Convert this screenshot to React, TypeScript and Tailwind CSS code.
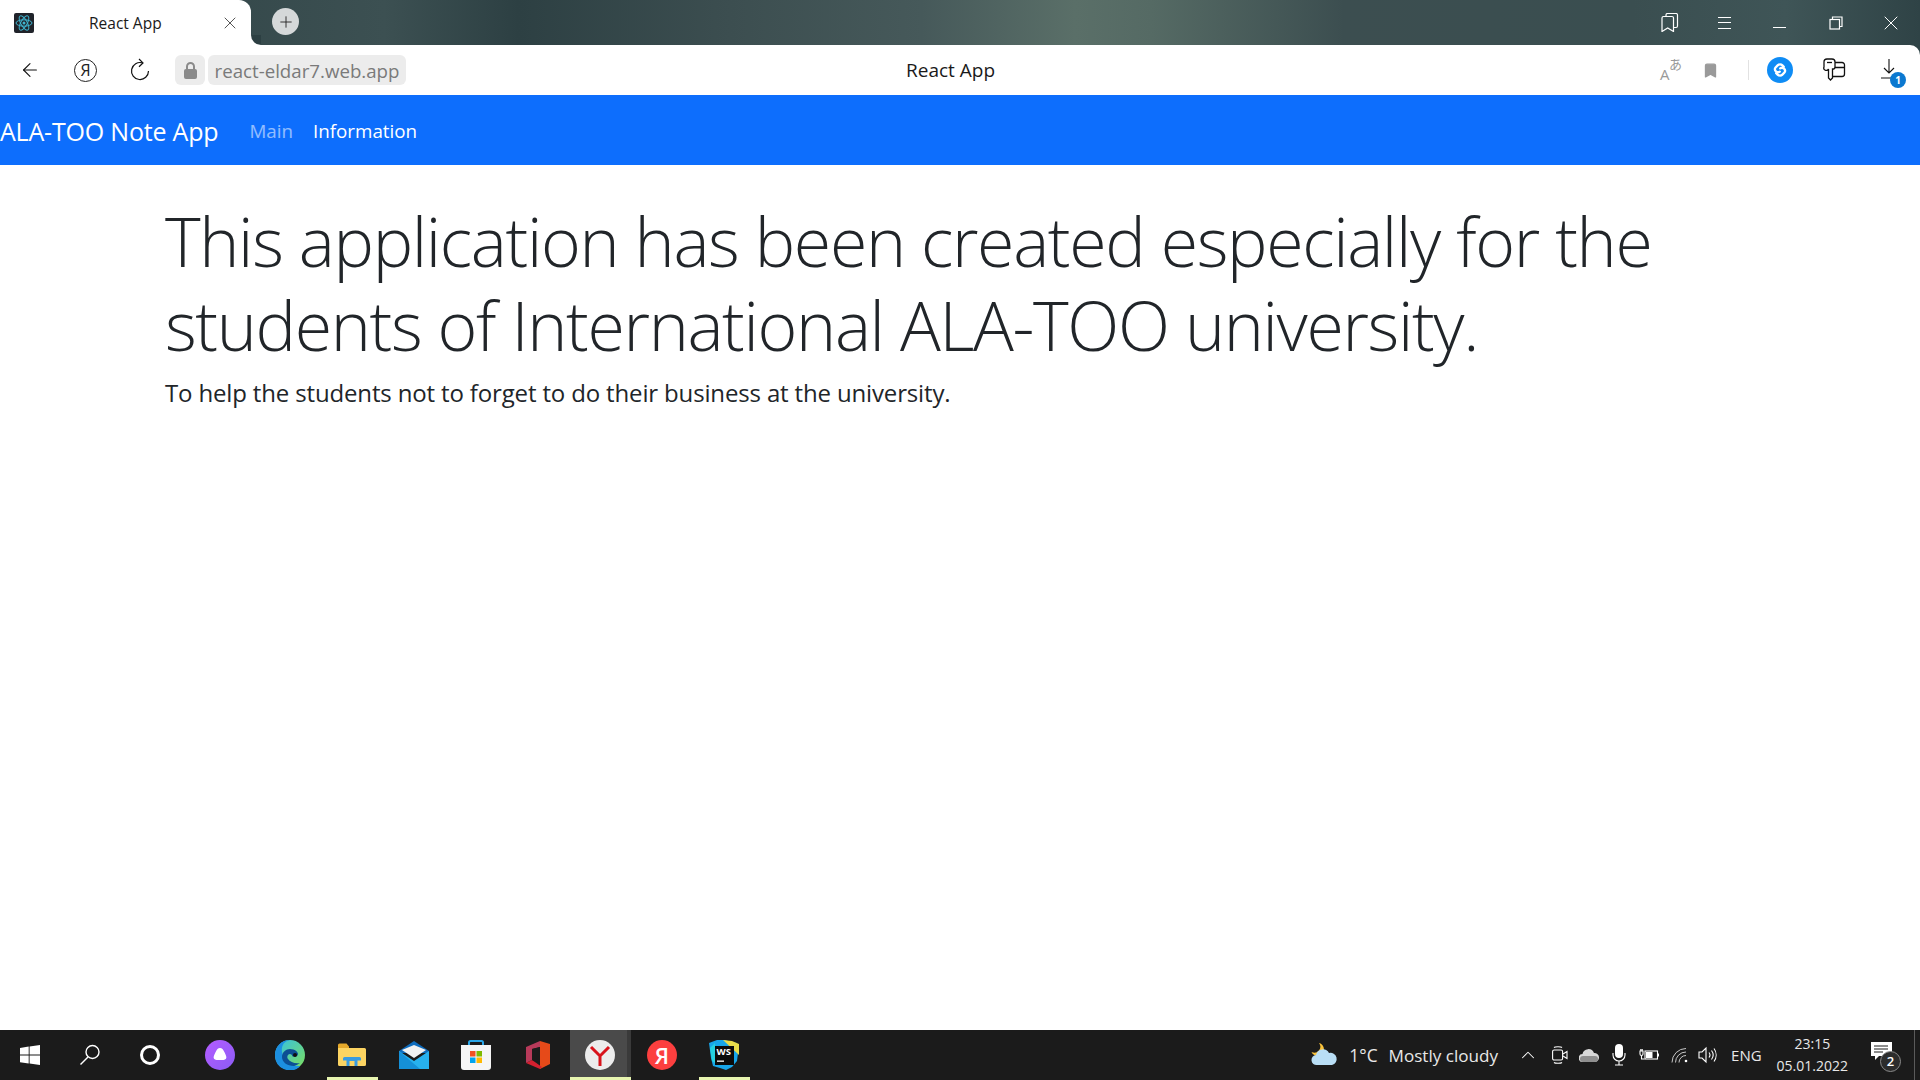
import React from 'react';
import { ArrowLeft, X, Plus, Bookmark, ChevronUp } from 'lucide-react';

const sans = "font-['Open_Sans','Noto_Sans',sans-serif]";

const WindowsLogo = () => (
  <svg width="20" height="20" viewBox="0 0 20 20" fill="#fff">
    <path d="M0 2.900 8.700 1.600v8H0zM9.600 1.500 20 0v9.600H9.600zM0 10.500h8.700v8L0 17.200zM9.600 10.500H20V20L9.600 18.600z" />
  </svg>
);

const SearchIcon = () => (
  <svg width="22" height="22" viewBox="0 0 22 22" fill="none" stroke="#fff" strokeWidth="1.400">
    <circle cx="13.500" cy="8" r="6.500" />
    <path d="M9 13 1.500 20.500" />
  </svg>
);

const AliceIcon = () => (
  <svg width="30" height="30" viewBox="0 0 30 30">
    <defs>
      <linearGradient id="alice" x1="0" y1="0" x2="1" y2="1">
        <stop offset="0" stopColor="#b45cff" />
        <stop offset="1" stopColor="#8b5cf6" />
      </linearGradient>
    </defs>
    <circle cx="15" cy="15" r="15" fill="url(#alice)" />
    <path d="M15 8c2 0 3.200 1.600 4.500 4.200 1.300 2.600 2.500 5 1.500 6.500-1 1.300-3.500 1.300-6 1.300s-5 0-6-1.300c-1-1.500.2-3.900 1.500-6.500C11.800 9.600 13 8 15 8z" fill="#fff" />
  </svg>
);

const EdgeIcon = () => (
  <svg width="30" height="30" viewBox="0 0 30 30">
    <defs>
      <linearGradient id="edgeB" x1="0" y1="0" x2="1" y2="1">
        <stop offset="0" stopColor="#33bfe8" />
        <stop offset="1" stopColor="#7ee05a" />
      </linearGradient>
    </defs>
    <circle cx="15" cy="15" r="15" fill="url(#edgeB)" />
    <path d="M0 15C0 6 7 0 15 0c-6 1-9 6-8 12 1 8 9 14 17 14l1 .5A15 15 0 0 1 0 15z" fill="#1c8fe0" />
    <path d="M7 17c0-5 4-8 8-8 5 0 8 3 8 5 0 2-2 2.500-4 2.500-1.500 0-2-.5-2-1.500-3-3-6 1-4 4 2 3 7 5 12 4a15 15 0 0 1-6 3C12 26 7 22 7 17z" fill="#0c4f94" />
    <circle cx="20" cy="15" r="2" fill="#111" />
  </svg>
);

const FolderIcon = () => (
  <svg width="28" height="24" viewBox="0 0 28 24">
    <path d="M0 2a1.500 1.500 0 0 1 1.500-1.500h7L11 3.500v3H0z" fill="#e6a92b" />
    <path d="M0 5h26.500A1.500 1.500 0 0 1 28 6.500v15a1.500 1.500 0 0 1-1.500 1.500h-25A1.500 1.500 0 0 1 0 21.500z" fill="#fcd462" />
    <path d="M5 15.500A1.500 1.500 0 0 1 6.500 14h15a1.500 1.500 0 0 1 1.500 1.500v2h-3.500V23h-11v-5.500H5z" fill="#3a9be0" />
    <path d="M11.500 18h5v5h-5z" fill="#fcd462" />
  </svg>
);

const MailIcon = () => (
  <svg width="30" height="28" viewBox="0 0 30 28">
    <path d="M0 10 15 0l15 10v2H0z" fill="#0f6cbd" />
    <path d="M3 9 15 4l12 5-12 8z" fill="#f2f2f2" />
    <path d="M0 10l15 10 15-10v18H0z" fill="#27b1ee" />
    <path d="M0 10l21 18H0z" fill="#1590d8" />
  </svg>
);

const StoreIcon = () => (
  <svg width="30" height="30" viewBox="0 0 30 30">
    <path d="M8 6V2.500A1.500 1.500 0 0 1 9.500 1h11A1.500 1.500 0 0 1 22 2.500V6" fill="none" stroke="#2aa6e8" strokeWidth="2" />
    <path d="M0 5h30v22a3 3 0 0 1-3 3H3a3 3 0 0 1-3-3z" fill="#f5f5f5" />
    <rect x="9" y="11" width="5.500" height="5.500" fill="#f25022" />
    <rect x="15.500" y="11" width="5.500" height="5.500" fill="#7fba00" />
    <rect x="9" y="17.500" width="5.500" height="5.500" fill="#00a4ef" />
    <rect x="15.500" y="17.500" width="5.500" height="5.500" fill="#ffb900" />
  </svg>
);

const OfficeIcon = () => (
  <svg width="24" height="28" viewBox="0 0 24 28">
    <path d="M14 0l10 3v20l-10 5z" fill="#e64a19" />
    <path d="M14 0 0 6v16l6-3V8l8-2z" fill="#b83a5a" />
    <path d="M0 22l14 6 2-2-10-7z" fill="#d4202f" />
    <path d="M6 8l8-2v16l-8-3z" fill="#1b1b1b" />
  </svg>
);

const YandexBrowserIcon = () => (
  <svg width="30" height="30" viewBox="0 0 30 30">
    <circle cx="15" cy="15" r="15" fill="#ececec" />
    <path d="M6 7l9 9 9-9M15 16v10" fill="none" stroke="#d8131b" strokeWidth="3" />
  </svg>
);

const WebStormIcon = () => (
  <svg width="30" height="30" viewBox="0 0 30 30">
    <path d="M0 3 8 0h8l6 2 6 1 1 10-1 8-5 6-6 3-6-2-7-2-2-8z" fill="#17a6ea" />
    <path d="M14 0l9 1 7 3v11z" fill="#e8dc4a" />
    <path d="M1 8 6 3v20l-3-2z" fill="#24d0e0" />
    <path d="M6 6h19v19H6z" fill="#0b0b0b" />
    <text x="7.500" y="15" fontSize="9.500" fontWeight="700" fill="#fff" fontFamily="'Open Sans',sans-serif">WS</text>
    <rect x="8" y="20.500" width="7" height="1.300" fill="#fff" />
  </svg>
);

const ReactFavicon = () => (
  <svg width="20" height="20" viewBox="0 0 20 20">
    <rect width="20" height="20" rx="2" fill="#20232a" />
    <g fill="none" stroke="#3fb4cf" strokeWidth="1">
      <ellipse cx="10" cy="10" rx="8" ry="3.200" />
      <ellipse cx="10" cy="10" rx="8" ry="3.200" transform="rotate(60 10 10)" />
      <ellipse cx="10" cy="10" rx="8" ry="3.200" transform="rotate(120 10 10)" />
    </g>
    <circle cx="10" cy="10" r="1.500" fill="#3fb4cf" />
  </svg>
);

const ReloadIcon = () => (
  <svg width="24" height="24" viewBox="0 0 24 24" fill="none" stroke="#111" strokeWidth="1.200">
    <path d="M14.500 4.900A8.500 8.500 0 1 0 20.500 13" />
    <path d="M11 1l4 3.900L11 8.800" />
  </svg>
);

const LockIcon = () => (
  <svg width="13" height="17" viewBox="0 0 13 17">
    <path d="M3 8V4.500a3.500 3.500 0 0 1 7 0V8" fill="none" stroke="#8a8a8a" strokeWidth="2" />
    <rect x="0" y="7" width="13" height="10" rx="2" fill="#8a8a8a" />
  </svg>
);

const ShazamIcon = () => (
  <svg width="26" height="26" viewBox="0 0 26 26">
    <circle cx="13" cy="13" r="13" fill="#0f8cf5" />
    <path d="M16.800 9.800 15.400 8.400a3.400 3.400 0 0 0-4.800 0L8.600 10.400a3 3 0 0 0 4.200 4.200M9.200 16.200 10.600 17.600a3.400 3.400 0 0 0 4.800 0L17.400 15.600a3 3 0 0 0-4.200-4.200" fill="none" stroke="#fff" strokeWidth="2.300" strokeLinecap="round" />
  </svg>
);

const KeyFolderIcon = () => (
  <svg width="24" height="24" viewBox="0 0 24 24" fill="none" stroke="#111" strokeWidth="1.300">
    <path d="M1 4a3 3 0 0 1 3-3h5a3 3 0 0 1 3 3v5a2 2 0 0 1-2.500 2v9l-2 2-2-2v-9A2 2 0 0 1 1 9z" />
    <path d="M4 4.500h5" />
    <path d="M12 4.500h7a2.500 2.500 0 0 1 2.500 2.500v9a2.500 2.500 0 0 1-2.500 2.500H10M12 9.500h9.500" />
  </svg>
);

const TranslateIcon = () => (
  <div className={`relative w-[22px] h-[22px] text-[#999] ${sans}`}>
    <span className="absolute left-0 bottom-[-1px] text-[15px] leading-none">A</span>
    <span className="absolute right-0 top-[-2px] text-[13px] leading-none font-['Noto_Sans_CJK_JP',sans-serif]">あ</span>
  </div>
);

const BookmarksIcon = () => (
  <svg width="18" height="19" viewBox="0 0 18 19" fill="none" stroke="#fff" strokeWidth="1.200">
    <path d="M5 3V2a1.500 1.500 0 0 1 1.500-1.500H15A1.500 1.500 0 0 1 16.500 2v11a1.500 1.500 0 0 1-1.500 1.500h-2" />
    <path d="M1 5a1.500 1.500 0 0 1 1.500-1.500h8.500A1.500 1.500 0 0 1 12.500 5v13.500L6.700 15 1 18.500z" />
  </svg>
);

const RestoreIcon = () => (
  <svg width="14" height="14" viewBox="0 0 14 14" fill="none" stroke="#fff" strokeWidth="1.200">
    <path d="M3.500 3V1h9.500v9.500h-2.500" />
    <rect x="1" y="3.500" width="9.500" height="9.500" />
  </svg>
);

const DownloadIcon = () => (
  <div className="relative w-[24px] h-[24px]">
    <svg width="16" height="22" viewBox="0 0 16 22" fill="none" stroke="#111" strokeWidth="1.100">
      <path d="M8 1v14M3 10l5 5 5-5M0 20h12" />
    </svg>
    <span className={`absolute left-[9px] top-[14px] w-[16px] h-[16px] rounded-full bg-[#0b78d0] text-white text-[10px] font-bold leading-[16px] text-center ${sans}`}>1</span>
  </div>
);

const WeatherIcon = () => (
  <svg width="28" height="24" viewBox="0 0 28 24">
    <path d="M9 0a6.500 6.500 0 1 1-7.500 9A6 6 0 0 0 9 0z" fill="#f9c23c" />
    <path d="M7 22a5 5 0 0 1-1-10 7 7 0 0 1 13-2 6 6 0 0 1 3 12z" fill="#b9def5" />
  </svg>
);

const MeetIcon = () => (
  <svg width="16" height="20" viewBox="0 0 16 20" fill="none" stroke="#fff" strokeWidth="1.100">
    <path d="M2 2.500c1-1 7-1 8 0M2 17.500c1 1 7 1 8 0" />
    <rect x="0.600" y="5" width="10" height="10" rx="1.500" />
    <path d="M11 9l4-2.500v7L11 11" />
  </svg>
);

const CloudIcon = () => (
  <svg width="20" height="14" viewBox="0 0 20 14">
    <path d="M4 14a4 4 0 0 1-.5-8A6 6 0 0 1 15 5a4.500 4.500 0 0 1 1 9z" fill="#d8d8d8" />
    <path d="M4 14a3 3 0 0 1 0-6h12a3 3 0 0 1 0 6z" fill="#8f8f8f" />
  </svg>
);

const MicIcon = () => (
  <svg width="14" height="22" viewBox="0 0 14 22" fill="none">
    <rect x="3" y="0" width="8" height="14" rx="4" fill="#fff" />
    <path d="M1 9v2a6 6 0 0 0 12 0V9M7 17v4M3 21h8" stroke="#fff" strokeWidth="1.100" />
  </svg>
);

const BatteryIcon = () => (
  <svg width="20" height="14" viewBox="0 0 20 14" fill="none" stroke="#fff" strokeWidth="1.100">
    <rect x="6" y="3" width="12.500" height="8" />
    <rect x="7" y="4" width="6.500" height="6" fill="#fff" stroke="none" />
    <path d="M19.500 5.500v3" />
    <path d="M1 3v3a1.500 1.500 0 0 0 3 0V3zM1.800 1v2M3.200 1v2M2.500 7.500V11h3" />
  </svg>
);

const WifiIcon = () => (
  <svg width="18" height="16" viewBox="0 0 18 16" fill="none" stroke="#c8c8c8" strokeWidth="1">
    <path d="M1 15.500A14 14 0 0 1 15 1.500M4.500 15.500A10.500 10.500 0 0 1 15 5M8 15.500A7 7 0 0 1 15 8.500" />
    <circle cx="15" cy="14" r="1.300" fill="#fff" stroke="none" />
  </svg>
);

const SpeakerIcon = () => (
  <svg width="20" height="18" viewBox="0 0 20 18" fill="none" stroke="#fff" strokeWidth="1.100">
    <path d="M1 6h3l4-4v14l-4-4H1z" />
    <path d="M11 6.500a4 4 0 0 1 0 5M13.500 4.500a7.500 7.500 0 0 1 0 9M16 2.500a11 11 0 0 1 0 13" />
  </svg>
);

const ActionCenterIcon = () => (
  <div className="relative w-[32px] h-[32px]">
    <svg width="21" height="19" viewBox="0 0 21 19" className="absolute left-0 top-[3px]">
      <path d="M0 0h21v14H8l-4 4v-4H0z" fill="#fff" />
      <path d="M3 4h14M3 7h14M3 10h9" stroke="#1a1a1a" strokeWidth="1" />
    </svg>
    <span className={`absolute left-[9px] top-[12px] w-[21px] h-[21px] rounded-full border border-[#8a8a8a] bg-[#2c2c2c] text-white text-[13px] font-semibold leading-[19px] text-center ${sans}`}>2</span>
  </div>
);

const App = () => {
  return (
    <div className={`h-screen flex flex-col overflow-hidden bg-white ${sans}`}>
      {/* browser tab strip */}
      <div className="h-[45px] flex items-stretch shrink-0 bg-[linear-gradient(90deg,#2c3f42_0%,#3c5052_20%,#2d4043_27%,#3c4e50_38%,#46595a_48%,#5a6f68_56%,#556a64_60%,#3c4e50_70%,#3a4e50_85%,#3f5557_93%,#2f4346_100%)]">
        <div className="relative w-[251px] bg-white rounded-tr-xl flex items-center pl-[14px] pr-[11px]">
          <ReactFavicon />
          <span className="ml-[55px] mt-[2px] text-[15.500px] text-[#1a1a1a] leading-none">React App</span>
          <X className="ml-auto text-[#333]" size={20} strokeWidth={1} />
          <div className="absolute left-full bottom-0 w-[10px] h-[10px] bg-white">
            <div className="w-full h-full bg-[#2c3f42] rounded-bl-[10px]" />
          </div>
        </div>
        <div className="ml-[21px] mt-[8px] w-[27px] h-[27px] rounded-full bg-[#d5d8d9] flex items-center justify-center">
          <Plus size={18} strokeWidth={1.2} className="text-[#222]" />
        </div>
        <div className="ml-auto flex items-center pr-[17px]">
          <BookmarksIcon />
          <div className="ml-[39px] flex flex-col gap-[4.500px] w-[13px]">
            <div className="h-px bg-white" />
            <div className="h-px bg-white" />
            <div className="h-px bg-white" />
          </div>
          <div className="ml-[42px] mt-[10px] w-[13px] h-px bg-white" />
          <div className="ml-[43px]"><RestoreIcon /></div>
          <X className="ml-[36px] text-white" size={24} strokeWidth={1} />
        </div>
      </div>

      {/* browser toolbar */}
      <div className="relative h-[50px] shrink-0 bg-[#2f4346]">
        <div className="h-full bg-white rounded-tr-[10px] flex items-center pl-[19px] pr-[15px]">
          <ArrowLeft size={22} strokeWidth={1.2} className="text-[#111]" />
          <div className="ml-[33px] w-[23px] h-[23px] rounded-full border-[1.500px] border-[#222] text-[#222] text-[16px] leading-[20px] text-center">Я</div>
          <div className="ml-[31px]"><ReloadIcon /></div>
          <div className="ml-[23px] w-[30px] h-[30px] rounded-md bg-[#ececec] flex items-center justify-center">
            <LockIcon />
          </div>
          <div className="ml-[3px] w-[198px] h-[30px] rounded-md bg-[#ececec] text-[#7a7a7a] text-[18.700px] leading-[31px] text-center whitespace-nowrap">react-eldar7.web.app</div>
          <div className="ml-auto flex items-center">
            <TranslateIcon />
            <Bookmark size={17} className="ml-[20px] text-[#9a9a9a]" fill="#9a9a9a" />
            <div className="ml-[29px] w-px h-[20px] bg-[#e2e2e2]" />
            <div className="ml-[18px]"><ShazamIcon /></div>
            <div className="ml-[30px]"><KeyFolderIcon /></div>
            <div className="ml-[34px]"><DownloadIcon /></div>
          </div>
        </div>
        <div className="absolute left-[906px] top-0 h-full flex items-center text-[19px] text-[#1a1a1a]">React App</div>
      </div>

      {/* app navbar */}
      <nav className="h-[70px] shrink-0 bg-[#0d6efd] flex items-center pt-[2px]">
        <a className="text-[25px] tracking-[-0.200px] text-white leading-none pt-[1px]">ALA-TOO Note App</a>
        <div className="ml-[31px] flex items-center gap-[20px] text-[18.800px] leading-none">
          <a className="text-white/55">Main</a>
          <a className="text-white">Information</a>
        </div>
      </nav>

      {/* page content */}
      <main className="flex-1 pl-[165px] pr-[165px] pt-[34px] text-[#212529]">
        <h1 className="text-[68px] tracking-[-1.340px] leading-[84px] font-light">This application has been created especially for the students of International ALA-TOO university.</h1>
        <p className="mt-[7px] text-[24px] tracking-[-0.150px] leading-[37px]">To help the students not to forget to do their business at the university.</p>
      </main>

      {/* windows taskbar */}
      <div className="h-[50px] shrink-0 bg-[#1b1b1b] flex items-stretch text-white">
        <div className="w-[60px] flex items-center justify-center"><WindowsLogo /></div>
        <div className="w-[60px] flex items-center justify-center"><SearchIcon /></div>
        <div className="w-[60px] flex items-center justify-center">
          <div className="w-[20px] h-[20px] rounded-full border-[3px] border-white" />
        </div>
        <div className="ml-[10px] w-[60px] flex items-center justify-center"><AliceIcon /></div>
        <div className="ml-[10px] w-[60px] flex items-center justify-center"><EdgeIcon /></div>
        <div className="w-[62px] ml-[1px] flex items-center justify-center relative">
          <FolderIcon />
          <div className="absolute bottom-0 left-[6px] right-[5px] h-[3px] bg-[#e8f5b0]" />
        </div>
        <div className="w-[62px] flex items-center justify-center"><MailIcon /></div>
        <div className="w-[62px] flex items-center justify-center"><StoreIcon /></div>
        <div className="w-[63px] pr-[1px] flex items-center justify-center"><OfficeIcon /></div>
        <div className="w-[61px] pl-[3px] bg-[#4a4a4a] border-r-[4px] border-[#3a3a3a] flex items-center justify-center relative">
          <YandexBrowserIcon />
          <div className="absolute bottom-0 left-0 -right-[4px] h-[3px] bg-[#e8f5b0]" />
        </div>
        <div className="w-[62px] flex items-center justify-center"><div className="w-[30px] h-[30px] rounded-full bg-[#fc3f3f] text-white text-[22px] font-semibold leading-[30px] text-center">Я</div></div>
        <div className="w-[62px] flex items-center justify-center relative">
          <WebStormIcon />
          <div className="absolute bottom-0 left-[6px] right-[5px] h-[3px] bg-[#e8f5b0]" />
        </div>

        <div className="ml-auto flex items-center">
          <WeatherIcon />
          <span className="ml-[11px] mt-[2px] text-[17.300px] leading-none text-[#e8e8e8]">1°C</span>
          <span className="ml-[11px] mt-[2px] text-[17.100px] leading-none text-[#e8e8e8]">Mostly cloudy</span>
          <ChevronUp size={22} strokeWidth={1.1} className="ml-[19px] text-white" />
          <div className="ml-[13px]"><MeetIcon /></div>
          <div className="ml-[11px]"><CloudIcon /></div>
          <div className="ml-[13px]"><MicIcon /></div>
          <div className="ml-[13px]"><BatteryIcon /></div>
          <div className="ml-[12px]"><WifiIcon /></div>
          <div className="ml-[9px]"><SpeakerIcon /></div>
          <span className="ml-[13px] text-[15px] leading-none text-[#e8e8e8]">ENG</span>
          <div className="ml-[15px] flex flex-col items-center text-[14px] leading-[22px] text-[#e8e8e8]">
            <span>23:15</span>
            <span>05.01.2022</span>
          </div>
          <div className="ml-[23px] mr-[11px]"><ActionCenterIcon /></div>
          <div className="w-px h-full bg-[#5a5a5a]" />
          <div className="w-[5px]" />
        </div>
      </div>
    </div>
  );
};

export default App;
